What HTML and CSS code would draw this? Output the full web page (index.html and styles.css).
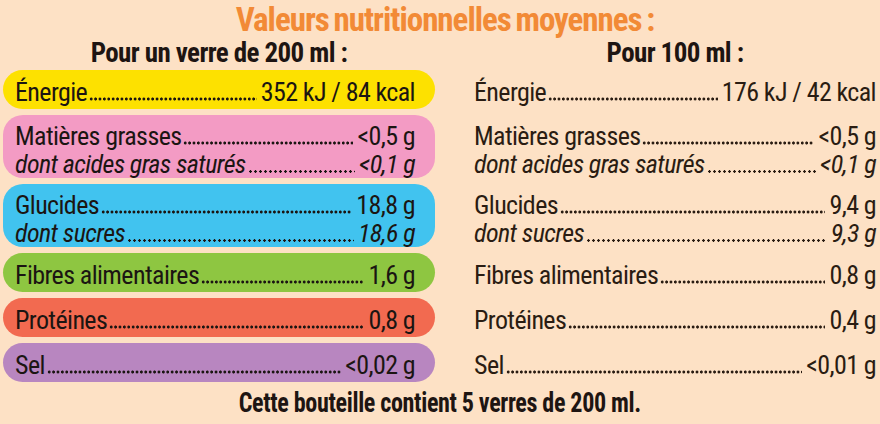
FILE: index.html
```html
<!DOCTYPE html>
<html lang="fr">
<head>
<meta charset="utf-8">
<link rel="stylesheet" href="styles.css">
</head>
<body>
<div class="panel">
  <h1 class="title">Valeurs nutritionnelles moyennes :</h1>
  <div class="table">
    <div class="head">Pour un verre de 200 ml :</div>
    <div class="head">Pour 100 ml :</div>

    <div class="cell pill yellow">
      <div class="row"><span class="lab">Énergie</span><span class="dots"></span><span class="val">352 kJ / 84 kcal</span></div>
    </div>
    <div class="cell plain">
      <div class="row"><span class="lab">Énergie</span><span class="dots"></span><span class="val">176 kJ / 42 kcal</span></div>
    </div>

    <div class="cell two pill pink">
      <div class="row"><span class="lab">Matières grasses</span><span class="dots"></span><span class="val">&lt;0,5 g</span></div>
      <div class="row it"><span class="lab">dont acides gras saturés</span><span class="dots"></span><span class="val">&lt;0,1 g</span></div>
    </div>
    <div class="cell two plain">
      <div class="row"><span class="lab">Matières grasses</span><span class="dots"></span><span class="val">&lt;0,5 g</span></div>
      <div class="row it"><span class="lab">dont acides gras saturés</span><span class="dots"></span><span class="val">&lt;0,1 g</span></div>
    </div>

    <div class="cell two pill blue">
      <div class="row"><span class="lab">Glucides</span><span class="dots"></span><span class="val">18,8 g</span></div>
      <div class="row it"><span class="lab">dont sucres</span><span class="dots"></span><span class="val">18,6 g</span></div>
    </div>
    <div class="cell two plain">
      <div class="row"><span class="lab">Glucides</span><span class="dots"></span><span class="val">9,4 g</span></div>
      <div class="row it"><span class="lab">dont sucres</span><span class="dots"></span><span class="val">9,3 g</span></div>
    </div>

    <div class="cell pill green">
      <div class="row"><span class="lab">Fibres alimentaires</span><span class="dots"></span><span class="val">1,6 g</span></div>
    </div>
    <div class="cell plain">
      <div class="row"><span class="lab">Fibres alimentaires</span><span class="dots"></span><span class="val">0,8 g</span></div>
    </div>

    <div class="cell pill red">
      <div class="row"><span class="lab">Protéines</span><span class="dots"></span><span class="val">0,8 g</span></div>
    </div>
    <div class="cell plain">
      <div class="row"><span class="lab">Protéines</span><span class="dots"></span><span class="val">0,4 g</span></div>
    </div>

    <div class="cell pill purple">
      <div class="row"><span class="lab">Sel</span><span class="dots"></span><span class="val">&lt;0,02 g</span></div>
    </div>
    <div class="cell plain">
      <div class="row"><span class="lab">Sel</span><span class="dots"></span><span class="val">&lt;0,01 g</span></div>
    </div>
  </div>
  <p class="foot"><span class="foot-text">Cette bouteille contient 5 verres de 200 ml.</span></p>
</div>
</body>
</html>
```
FILE: styles.css
```css
html, body {
  margin: 0;
  padding: 0;
  background: #fde1c5;
}

.panel {
  width: 880px;
  height: 424px;
  overflow: hidden;
  font-family: "Roboto Condensed", "Roboto", sans-serif;
  color: #1e1512;
}

.title {
  margin: 0;
  padding-left: 10px;
  height: 39px;
  font-size: 33px;
  line-height: 39px;
  font-weight: 700;
  color: #f28a36;
  text-align: center;
  letter-spacing: -1px;
  word-spacing: -2px;
}

.table {
  display: grid;
  grid-template-columns: 432px 402px;
  column-gap: 39px;
  row-gap: 6px;
  padding-left: 3px;
}

.head {
  height: 32px;
  margin: -2px 0 -5px;
  font-size: 27px;
  line-height: 32px;
  font-weight: 700;
  text-align: center;
  letter-spacing: -0.6px;
}

.cell {
  padding-top: 8px;
  padding-bottom: 3px;
}

.cell.two {
  padding-top: 7px;
  padding-bottom: 0;
}

.pill {
  border-radius: 20px;
  padding-left: 12px;
  padding-right: 20px;
  color: #1b1512;
}

.plain {
  color: #2a1c12;
}

.yellow { background: #fde100; }
.pink { background: #f39bc4; }
.blue { background: #41c3ef; }
.green { background: #8ec641; }
.red { background: #f26a50; }
.purple { background: #b886c0; }

.row {
  display: flex;
  align-items: flex-end;
  height: 28px;
  font-size: 26px;
  line-height: 28px;
  letter-spacing: -0.6px;
  white-space: nowrap;
}

.row.it {
  font-style: italic;
}

.dots {
  flex: 1;
  height: 4px;
  margin: 0 4px 5px 2px;
  background-image: radial-gradient(circle, currentColor 1.3px, transparent 1.8px);
  background-size: 4.4px 4px;
  background-repeat: repeat-x;
  background-position: left bottom;
}

.it .dots {
  height: 3px;
  background-image: radial-gradient(circle, currentColor 1px, transparent 1.5px);
  background-size: 5px 3px;
}

.val {
  text-align: right;
}

.foot {
  margin: 4px 0 0;
  height: 33px;
  font-size: 28px;
  line-height: 33px;
  font-weight: 700;
  text-align: center;
}

.foot-text {
  display: inline-block;
  letter-spacing: -0.4px;
  transform: scaleX(0.86);
}
```
